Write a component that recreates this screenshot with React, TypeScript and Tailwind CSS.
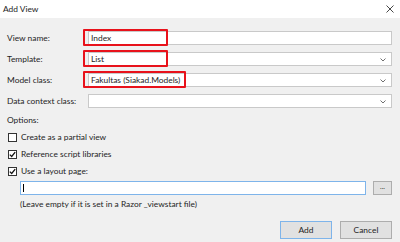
import React from 'react';

const font = { fontFamily: 'Lato, "Noto Sans", sans-serif' };

const Chevron = () => (
  <svg width="6" height="4" viewBox="0 0 6 4" className="absolute right-[5px] top-[5px]">
    <path d="M0.5 0.5 L3 3 L5.5 0.5" fill="none" stroke="#707070" strokeWidth="1" />
  </svg>
);

const Field = ({
  label,
  value,
  select,
  mark,
}: {
  label: string;
  value?: string;
  select?: boolean;
  mark?: number;
}) => (
  <div className="flex items-center h-[14px]">
    <span className="w-[81px] text-[8.4px] leading-none text-[#1e1e1e]">{label}</span>
    <div className="relative flex-1 h-[14px] bg-white border border-[#c9c9c9]">
      {value && (
        <span className="absolute left-[2px] top-[1px] text-[8.4px] leading-[11px] text-[#1e1e1e]">{value}</span>
      )}
      {select && <Chevron />}
      {mark && (
        <div
          className="absolute left-[-6px] top-[-3px] h-[17px] border-2 border-[#e8121b] rounded-[1px]"
          style={{ width: mark }}
        />
      )}
    </div>
  </div>
);

const Check = ({ checked, label }: { checked?: boolean; label: string }) => (
  <div className="flex items-center h-[10px] gap-[4px]">
    <div className="w-[9px] h-[9px] bg-white border border-[#333] flex items-center justify-center">
      {checked && (
        <svg width="7" height="7" viewBox="0 0 7 7">
          <path d="M0.8 3.6 L2.7 5.5 L6.2 1.2" fill="none" stroke="#111" strokeWidth="1.3" />
        </svg>
      )}
    </div>
    <span className="text-[8.4px] leading-none text-[#1e1e1e]">{label}</span>
  </div>
);

export default function App() {
  return (
    <div className="w-[400px] h-[242px] bg-[#f0f0f0] flex flex-col overflow-hidden" style={font}>
      <div className="h-[18px] bg-white flex items-center justify-between pl-[3px] pr-[6px]">
        <span className="text-[8.4px] text-[#1e1e1e]">Add View</span>
        <svg width="8" height="8" viewBox="0 0 8 8">
          <path d="M0.5 0.5 L7.5 7.5 M7.5 0.5 L0.5 7.5" stroke="#333" strokeWidth="0.9" />
        </svg>
      </div>
      <div className="flex flex-col pl-[7px] pr-[8px] pt-[13px]">
        <div className="flex flex-col gap-[7px]">
          <Field label="View name:" value="Index" mark={85} />
          <Field label="Template:" value="List" select mark={85} />
          <Field label="Model class:" value="Fakultas (Siakad.Models)" select mark={103} />
          <Field label="Data context class:" select />
        </div>
        <span className="mt-[8px] text-[8.4px] leading-none text-[#1e1e1e]">Options:</span>
        <div className="flex flex-col gap-[7px] mt-[8px] pl-[1px]">
          <Check label="Create as a partial view" />
          <Check checked label="Reference script libraries" />
          <Check checked label="Use a layout page:" />
        </div>
        <div className="flex items-center mt-[5px] pl-[13px] gap-[7px]">
          <div className="relative flex-1 h-[14px] bg-white border border-[#7eb4ea]">
            <div className="absolute left-[2px] top-[2px] w-px h-[8px] bg-black" />
          </div>
          <button className="w-[19px] h-[14px] bg-[#e1e1e1] border border-[#adadad] text-[7px] leading-none text-[#333] pb-[3px]">
            ...
          </button>
        </div>
        <span className="mt-[5px] pl-[13px] text-[8.4px] leading-none text-[#1e1e1e]">
          (Leave empty if it is set in a Razor _viewstart file)
        </span>
        <div className="flex justify-end gap-[8px] mt-[12px]">
          <button className="w-[52px] h-[18px] bg-[#e1e1e1] border border-[#7eb4ea] text-[8.4px] leading-none text-[#1e1e1e]">
            Add
          </button>
          <button className="w-[52px] h-[18px] bg-[#e1e1e1] border border-[#adadad] text-[8.4px] leading-none text-[#1e1e1e]">
            Cancel
          </button>
        </div>
      </div>
    </div>
  );
}
